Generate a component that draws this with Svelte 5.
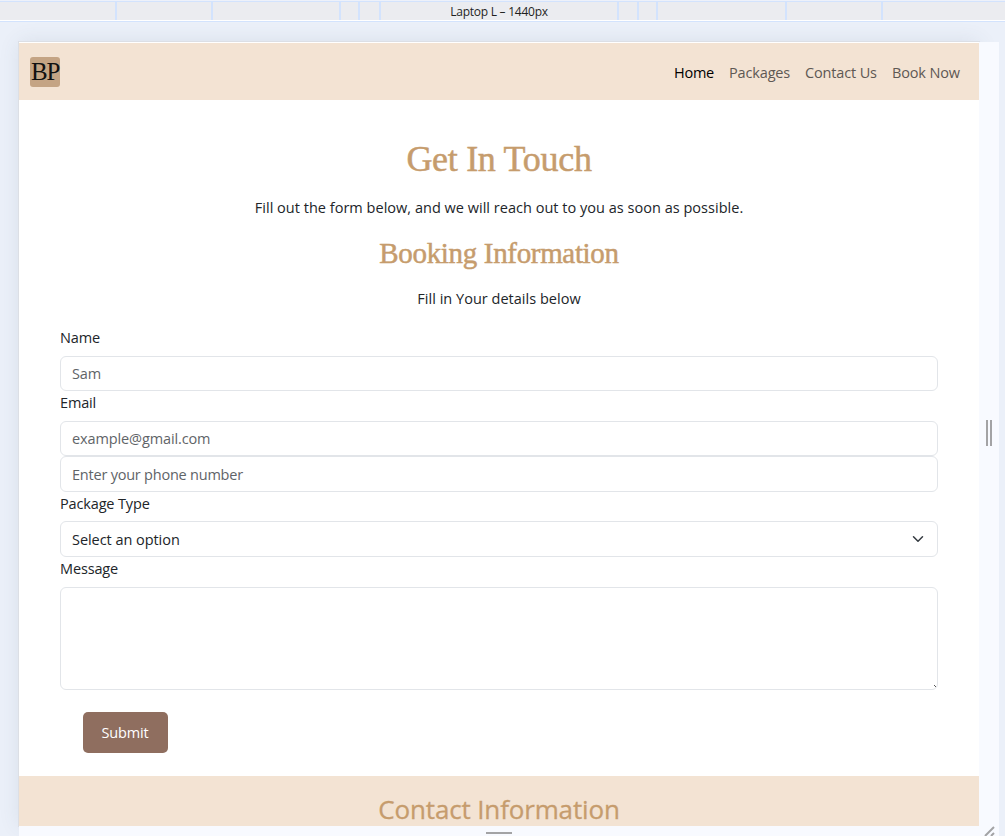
<script>
  const segments = [117, 96, 128, 19, 21, 238, 20, 19, 129, 96];
  const links = [
    { label: 'Home', width: 40, active: true },
    { label: 'Packages', width: 61 },
    { label: 'Contact Us', width: 72 },
    { label: 'Book Now', width: 69 }
  ];
</script>

<div class="device">
  <div class="ruler">
    {#each segments as w}
      <i style="width: {w}px"></i>
    {/each}
    <span>Laptop L – 1440px</span>
  </div>

  <div class="stage">
    <div class="page">
      <nav>
        <div class="logo"><span>BP</span></div>
        <div class="links">
          {#each links as l}
            <a href="#top" class:active={l.active} style="width: {l.width}px">{l.label}</a>
          {/each}
        </div>
      </nav>

      <main>
        <h1>Get In Touch</h1>
        <p class="lead">Fill out the form below, and we will reach out to you as soon as possible.</p>
        <h2>Booking Information</h2>
        <p class="sub">Fill in Your details below</p>

        <form>
          <label for="name">Name</label>
          <input id="name" placeholder="Sam" />
          <label for="email">Email</label>
          <input id="email" placeholder="example@gmail.com" />
          <input id="phone" placeholder="Enter your phone number" />
          <label for="package">Package Type</label>
          <div class="select" id="package">
            <span>Select an option</span>
            <svg width="12" height="12" viewBox="0 0 16 16"><path d="m2 5 6 6 6-6" /></svg>
          </div>
          <label for="message">Message</label>
          <div class="area">
            <textarea id="message"></textarea>
            <svg width="3" height="3" viewBox="0 0 3 3"><path d="M0 0h1v1H0zM1 1h1v1H1z" /></svg>
          </div>
          <button type="button">Submit</button>
        </form>
      </main>

      <section><h3>Contact Information</h3></section>
    </div>

    <div class="side"><i></i><i></i></div>
    <div class="bottom">
      <i></i>
      <svg width="12" height="10" viewBox="0 0 12 10"><path d="M1 10 10 1M7 10 10 7" /></svg>
    </div>
  </div>
</div>

<style>
  :global(body) { overflow: hidden; }
  * { box-sizing: border-box; }
  .device {
    width: 1005px; height: 836px; overflow: hidden;
    display: flex; flex-direction: column;
    background: #ebf0f9;
    font-family: "Open Sans", sans-serif;
    color: #212529;
  }
  .ruler {
    position: relative; flex: none; display: flex;
    height: 22px; margin-bottom: 20px;
    border-top: 1px solid #edf1fa; border-bottom: 1px solid #d3e3fd;
    background: linear-gradient(#d3e3fd 1px, #ebecf0 1px 19px, #fff 19px);
  }
  .ruler i { flex: none; height: 19px; border-right: 2px solid #d3e3fd; }
  .ruler span {
    position: absolute; left: 0; right: 7px; top: 2px;
    text-align: center; font-size: 12px; line-height: 17px; letter-spacing: -0.25px; color: #1f1f1f;
  }
  .stage {
    flex: none; width: 980px; height: 794px; margin-left: 19px;
    display: grid; grid-template-columns: 960px 20px; grid-template-rows: 784px 10px;
  }
  .page {
    height: 784px; padding-top: 1px; background: #fff;
    box-shadow: 0 0 0 1px #dcdfe5, 0 0 20px rgba(60, 80, 100, 0.11);
    display: flex; flex-direction: column; overflow: hidden;
  }
  nav {
    flex: none; height: 57px; padding: 1px 18px 0 11px; background: #f3e3d3;
    display: flex; align-items: center; justify-content: space-between;
  }
  .logo {
    width: 30px; height: 30px; border-radius: 3px; background: #c4a484;
    display: flex; align-items: center; justify-content: center;
    font: 25px/30px "Liberation Serif", serif; color: #111;
  }
  .logo span { letter-spacing: -1.2px; }
  .links { display: flex; gap: 15px; padding-top: 2px; }
  .links a {
    white-space: nowrap; font-size: 14.5px; line-height: 24px; letter-spacing: -0.15px;
    color: #5e5853; text-decoration: none;
  }
  .links a.active { color: #000; letter-spacing: -0.25px; }
  main { flex: none; height: 676px; padding: 37px 41px 0; }
  h1, h2, h3, p { margin: 0; text-align: center; font-weight: 400; }
  h1, h2 { font-family: "Liberation Serif", serif; color: #c69c6d; -webkit-text-stroke: 0.5px #c69c6d; }
  h1 { font-size: 36px; line-height: 44px; letter-spacing: -0.3px; }
  h2 { font-size: 29px; line-height: 36px; margin-top: 16px; letter-spacing: -0.33px; }
  p { font-size: 14.5px; line-height: 22px; letter-spacing: 0.02px; }
  .lead { margin-top: 16px; }
  .sub { margin-top: 17px; }
  form { display: flex; flex-direction: column; margin-top: 16px; }
  label { height: 29.5px; font-size: 14.5px; line-height: 24px; letter-spacing: -0.15px; }
  input, .select, textarea {
    width: 878px; height: 35.5px; padding: 1px 11px 0; margin: 0;
    border: 1px solid #e2e5e9; border-radius: 6px; background: #fff; outline: none;
    font: 14.5px "Open Sans", sans-serif; letter-spacing: -0.12px; color: #212529;
  }
  input::placeholder { color: #5f6468; opacity: 1; }
  #phone { letter-spacing: -0.22px; }
  .select { display: flex; align-items: center; justify-content: space-between; padding-right: 13px; letter-spacing: -0.05px; }
  .select svg { margin-bottom: 1px; }
  .select svg path { fill: none; stroke: #343a40; stroke-width: 2; stroke-linecap: round; stroke-linejoin: round; }
  .area { position: relative; height: 103px; margin-top: 1px; }
  textarea { display: block; height: 103px; resize: none; }
  .area svg { position: absolute; right: 1px; bottom: 2px; fill: #555; }
  button {
    width: 85px; height: 41px; margin: 21.5px 0 0 22.5px; padding: 0;
    border: 0; border-radius: 5px; background: #8f6e5f; color: #fff;
    font: 14.5px "Open Sans", sans-serif; letter-spacing: -0.2px;
  }
  section { flex: 1; padding-top: 15px; background: #f3e3d3; overflow: hidden; }
  h3 { font-size: 26px; line-height: 36px; letter-spacing: -0.15px; color: #c69c6d; -webkit-text-stroke: 0.3px #c69c6d; }
  .side { background: #f8faff; display: flex; align-items: center; justify-content: center; gap: 2px; padding-bottom: 2px; }
  .side i { width: 2px; height: 26px; background: #a3a3a5; }
  .bottom { grid-column: 1 / 3; background: #f8faff; display: flex; justify-content: space-between; }
  .bottom i { width: 26px; height: 2px; margin: 6px 0 0 467px; background: #a3a3a5; }
  .bottom svg { margin-right: 3px; }
  .bottom path { fill: none; stroke: #a3a3a5; stroke-width: 2; }
</style>
